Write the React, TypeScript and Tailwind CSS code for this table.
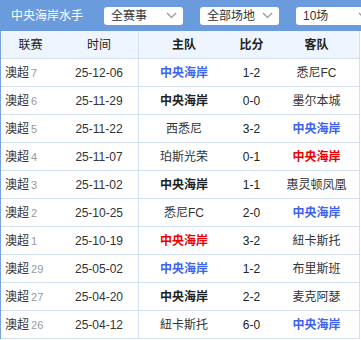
const rows = [
  { n: "7", date: "25-12-06", home: "中央海岸", score: "1-2", away: "悉尼FC", res: "l", side: "h" },
  { n: "6", date: "25-11-29", home: "中央海岸", score: "0-0", away: "墨尔本城", res: "d", side: "h" },
  { n: "5", date: "25-11-22", home: "西悉尼", score: "3-2", away: "中央海岸", res: "l", side: "a" },
  { n: "4", date: "25-11-07", home: "珀斯光荣", score: "0-1", away: "中央海岸", res: "w", side: "a" },
  { n: "3", date: "25-11-02", home: "中央海岸", score: "1-1", away: "惠灵顿凤凰", res: "d", side: "h" },
  { n: "2", date: "25-10-25", home: "悉尼FC", score: "2-0", away: "中央海岸", res: "l", side: "a" },
  { n: "1", date: "25-10-19", home: "中央海岸", score: "3-2", away: "紐卡斯托", res: "w", side: "h" },
  { n: "29", date: "25-05-02", home: "中央海岸", score: "1-2", away: "布里斯班", res: "l", side: "h" },
  { n: "27", date: "25-04-20", home: "中央海岸", score: "2-2", away: "麦克阿瑟", res: "d", side: "h" },
  { n: "26", date: "25-04-12", home: "紐卡斯托", score: "6-0", away: "中央海岸", res: "l", side: "a" },
];

const teamColor = (res: string) =>
  res === "w" ? "text-[#ee0000] font-bold" : res === "l" ? "text-[#3d63f2] font-bold" : "text-[#222] font-bold";

const Chevron = () => (
  <svg width="11" height="7" viewBox="0 0 11 7" className="shrink-0">
    <polyline points="1,1 5.5,5.5 10,1" fill="none" stroke="#a0a0a0" strokeWidth="1.4" />
  </svg>
);

const Select = ({ label }: { label: string }) => (
  <div className="w-[79px] h-[18px] shrink-0 bg-white rounded-[3px] flex items-center justify-between pl-[7px] pr-[6px] text-[12px] text-[#333]">
    <span>{label}</span>
    <Chevron />
  </div>
);

export default function App() {
  return (
    <div className="w-[361px] h-[340px] overflow-hidden bg-white text-[12px] text-[#333]" style={{ fontFamily: '"Liberation Sans", "Noto Sans CJK SC", sans-serif' }}>
      <div className="h-[31px] bg-[#6a9bdc] flex items-center overflow-hidden">
        <span className="w-[104px] shrink-0 pl-[11px] text-white text-[12px]">中央海岸水手</span>
        <div className="flex gap-[17px]">
          <Select label="全赛事" />
          <Select label="全部场地" />
          <Select label="10场" />
        </div>
      </div>
      <div className="w-[360px] border-l border-[#76a3df] border-r border-r-[#d3e1f3]">
        <div className="grid grid-cols-[59px_78px_1px_90px_45px_85px] h-[28px] bg-[#eef5fe] border-b border-[#d3e1f3] font-bold text-[#222] items-center text-center">
          <div className="font-normal">联赛</div>
          <div className="font-normal">时间</div>
          <div className="h-full bg-[#d3e1f3]" />
          <div>主队</div>
          <div>比分</div>
          <div>客队</div>
        </div>
        {rows.map((r, i) => (
          <div key={i} className="grid grid-cols-[59px_78px_1px_90px_45px_85px] h-[28px] border-b border-[#d3e1f3] items-center text-center">
            <div className="text-left pl-[4px]">
              澳超<span className="text-[#999] text-[11px] ml-[2px]">{r.n}</span>
            </div>
            <div>{r.date}</div>
            <div className="h-full bg-[#d3e1f3]" />
            <div className={r.side === "h" ? teamColor(r.res) : ""}>{r.home}</div>
            <div className="text-[#222]">{r.score}</div>
            <div className={r.side === "a" ? teamColor(r.res) : ""}>{r.away}</div>
          </div>
        ))}
      </div>
    </div>
  );
}
